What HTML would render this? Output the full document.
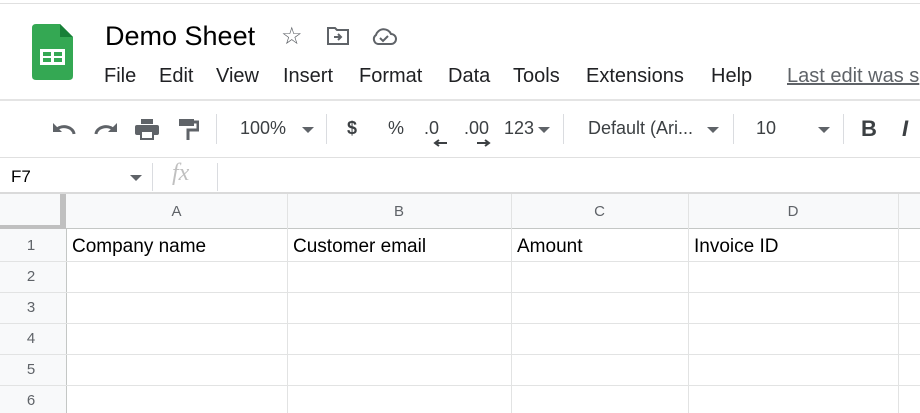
<!DOCTYPE html>
<html><head><style>
body{margin:0;width:920px;height:413px;overflow:hidden;background:#fff;font-family:"Liberation Sans",Arial,sans-serif;position:relative;color:#202124}
.a{position:absolute}
.menu span{position:absolute;top:0;font-size:20px;color:#202124}
.tb{position:absolute;top:118px;font-size:18px;color:#3c4043}
.sep{position:absolute;width:1px;background:#dadce0}
.hl{position:absolute;left:0;width:920px;height:1px;background:#e2e3e3}
.vl{position:absolute;top:194px;width:1px;height:219px;background:#e2e3e3}
.rn{position:absolute;left:0;width:62px;text-align:center;font-size:15px;color:#5f6368}
.ch{position:absolute;top:203px;font-size:15px;color:#5f6368;text-align:center}
.ct{position:absolute;top:236px;font-size:19px;color:#000}
.tri{position:absolute;width:0;height:0;border-left:6px solid transparent;border-right:6px solid transparent;border-top:6px solid #5f6368}
</style></head><body>
<div class="a" style="left:0;top:3px;width:920px;height:1px;background:#e0e0e0"></div>
<svg class="a" style="left:32px;top:24px" width="41" height="56" viewBox="0 0 41 56">
<path d="M4 0H28L41 13V52Q41 56 37 56H4Q0 56 0 52V4Q0 0 4 0Z" fill="#34a853"/>
<path d="M28 0V13H41Z" fill="#188038"/>
<rect x="8" y="25" width="25" height="16" fill="#fff"/>
<rect x="11" y="28" width="8" height="4" fill="#34a853"/><rect x="22" y="28" width="8" height="4" fill="#34a853"/>
<rect x="11" y="34" width="8" height="4" fill="#34a853"/><rect x="22" y="34" width="8" height="4" fill="#34a853"/>
</svg>
<div class="a" style="left:105px;top:21px;font-size:27px;color:#000">Demo Sheet</div>
<div class="a" style="left:281px;top:22px;font-size:24px;color:#5f6368">☆</div>
<svg class="a" style="left:326px;top:26px" width="24" height="20" viewBox="0 0 24 20"><path d="M2 2H9L11 4H22V18H2Z" fill="none" stroke="#5f6368" stroke-width="2"/><path d="M8 11H15M12 8L15 11L12 14" fill="none" stroke="#5f6368" stroke-width="2"/></svg>
<svg class="a" style="left:371px;top:28px" width="26" height="18" viewBox="0 0 26 18"><path d="M7 16H20A5 5 0 0 0 20 6A8 8 0 0 0 5 7A5 5 0 0 0 7 16Z" fill="none" stroke="#5f6368" stroke-width="2"/><path d="M9 10L12 13L17 8" fill="none" stroke="#5f6368" stroke-width="2"/></svg>
<div class="menu a" style="left:0;top:65px;width:920px;height:24px">
<span style="left:104px">File</span><span style="left:159px">Edit</span><span style="left:216px">View</span><span style="left:283px">Insert</span><span style="left:359px">Format</span><span style="left:448px">Data</span><span style="left:513px">Tools</span><span style="left:586px">Extensions</span><span style="left:711px">Help</span><span style="left:787px;color:#5f6368;text-decoration:underline">Last edit was s</span>
</div>
<div class="a" style="left:0;top:99px;width:920px;height:2px;background:#e4e4e4"></div>
<svg class="a" style="left:52px;top:121px" width="24" height="14" viewBox="0 0 24 14"><path d="M22 13A10 8 0 0 0 5 8" fill="none" stroke="#5f6368" stroke-width="3"/><path d="M1 2V11H10Z" fill="#5f6368"/></svg>
<svg class="a" style="left:94px;top:121px" width="24" height="14" viewBox="0 0 24 14"><path d="M2 13A10 8 0 0 1 19 8" fill="none" stroke="#5f6368" stroke-width="3"/><path d="M23 2V11H14Z" fill="#5f6368"/></svg>
<svg class="a" style="left:135px;top:119px" width="24" height="22" viewBox="0 0 24 22"><rect x="6" y="0" width="12" height="5" fill="#5f6368"/><rect x="0" y="6" width="24" height="10" rx="2" fill="#5f6368"/><rect x="6" y="12" width="12" height="8" fill="#fff" stroke="#5f6368" stroke-width="2"/></svg>
<svg class="a" style="left:179px;top:119px" width="20" height="22" viewBox="0 0 20 22"><rect x="0" y="0" width="15" height="7" fill="#5f6368"/><path d="M15 3H19V11H9V21" fill="none" stroke="#5f6368" stroke-width="3"/></svg>
<div class="sep" style="left:216px;top:114px;height:30px"></div>
<div class="tb" style="left:240px">100%</div><div class="tri" style="left:302px;top:127px"></div>
<div class="sep" style="left:326px;top:114px;height:30px"></div>
<div class="tb" style="left:347px;font-weight:bold">$</div>
<div class="tb" style="left:388px">%</div>
<div class="tb" style="left:424px">.0</div><svg class="a" style="left:433px;top:139px" width="14" height="8" viewBox="0 0 14 8"><path d="M14 4H3M6 1L2 4L6 7" fill="none" stroke="#3c4043" stroke-width="2"/></svg>
<div class="tb" style="left:464px">.00</div><svg class="a" style="left:477px;top:139px" width="14" height="8" viewBox="0 0 14 8"><path d="M0 4H11M8 1L12 4L8 7" fill="none" stroke="#3c4043" stroke-width="2"/></svg>
<div class="tb" style="left:504px">123</div><div class="tri" style="left:538px;top:127px"></div>
<div class="sep" style="left:563px;top:114px;height:30px"></div>
<div class="tb" style="left:588px">Default (Ari...</div><div class="tri" style="left:707px;top:127px"></div>
<div class="sep" style="left:733px;top:114px;height:30px"></div>
<div class="tb" style="left:756px">10</div><div class="tri" style="left:818px;top:127px"></div>
<div class="sep" style="left:843px;top:114px;height:30px"></div>
<div class="tb" style="left:861px;font-size:22px;font-weight:bold;top:116px">B</div>
<div class="tb" style="left:902px;font-size:22px;font-weight:bold;font-style:italic;top:116px">I</div>
<div class="a" style="left:0;top:157px;width:920px;height:1px;background:#e0e0e0"></div>
<div class="a" style="left:11px;top:167px;font-size:17px;color:#000">F7</div>
<div class="tri" style="left:130px;top:175px"></div>
<div class="sep" style="left:152px;top:163px;height:28px"></div>
<div class="a" style="left:172px;top:160px;font-size:24px;font-style:italic;color:#c0c0c0;font-family:'Liberation Serif',serif">fx</div>
<div class="sep" style="left:217px;top:163px;height:28px"></div>
<div class="a" style="left:0;top:192px;width:920px;height:2px;background:#dadada"></div>
<div class="a" style="left:0;top:194px;width:920px;height:35px;background:#f8f9fa"></div>
<div class="a" style="left:0;top:194px;width:66px;height:219px;background:#f8f9fa"></div>
<div class="a" style="left:60px;top:194px;width:6px;height:35px;background:#c0c0c0"></div>
<div class="a" style="left:0;top:225px;width:66px;height:4px;background:#c0c0c0"></div>
<div class="a" style="left:66px;top:228px;width:854px;height:1px;background:#c4c7c5"></div>
<div class="a" style="left:66px;top:229px;width:1px;height:184px;background:#c4c7c5"></div>
<div class="vl" style="left:287px"></div><div class="vl" style="left:511px"></div><div class="vl" style="left:688px"></div><div class="vl" style="left:898px"></div>
<div class="hl" style="top:261px"></div><div class="hl" style="top:292px"></div><div class="hl" style="top:323px"></div><div class="hl" style="top:354px"></div><div class="hl" style="top:385px"></div>
<div class="ch" style="left:66px;width:221px">A</div><div class="ch" style="left:287px;width:224px">B</div><div class="ch" style="left:511px;width:177px">C</div><div class="ch" style="left:688px;width:210px">D</div>
<div class="rn" style="top:237px">1</div><div class="rn" style="top:268px">2</div><div class="rn" style="top:299px">3</div><div class="rn" style="top:330px">4</div><div class="rn" style="top:361px">5</div><div class="rn" style="top:392px">6</div>
<div class="ct" style="left:72px">Company name</div><div class="ct" style="left:293px">Customer email</div><div class="ct" style="left:517px">Amount</div><div class="ct" style="left:694px">Invoice ID</div>
</body></html>
